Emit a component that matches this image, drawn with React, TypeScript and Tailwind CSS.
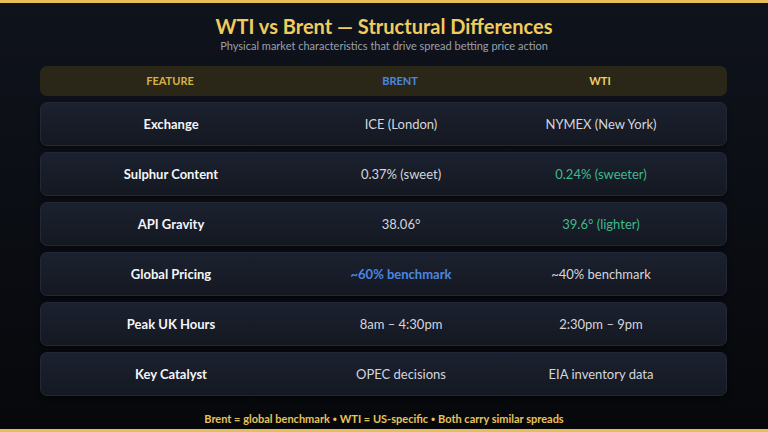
import React from "react";

type Row = {
  feature: string;
  brent: string;
  wti: string;
  brentClass?: string;
  wtiClass?: string;
};

const rows: Row[] = [
  { feature: "Exchange", brent: "ICE (London)", wti: "NYMEX (New York)" },
  { feature: "Sulphur Content", brent: "0.37% (sweet)", wti: "0.24% (sweeter)", wtiClass: "text-[#3dbb8c]" },
  { feature: "API Gravity", brent: "38.06°", wti: "39.6° (lighter)", wtiClass: "text-[#3dbb8c]" },
  { feature: "Global Pricing", brent: "~60% benchmark", wti: "~40% benchmark", brentClass: "text-[#4a87e0] font-bold" },
  { feature: "Peak UK Hours", brent: "8am – 4:30pm", wti: "2:30pm – 9pm" },
  { feature: "Key Catalyst", brent: "OPEC decisions", wti: "EIA inventory data" },
];

function Dot() {
  return <span style={{ fontFamily: "'Noto Sans', sans-serif" }}> • </span>;
}

export default function App() {
  return (
    <div
      className="w-[768px] h-[432px] flex flex-col overflow-hidden bg-gradient-to-b from-[#0f131c] to-[#07080b]"
      style={{ fontFamily: "Lato, 'Noto Sans', sans-serif" }}
    >
      <div className="h-[3px] bg-[#e4bf57] shrink-0" />
      <div className="flex flex-col items-center pt-[11px]">
        <h1 className="text-[20px] leading-[24px] font-bold text-[#f2cb5e]">
          WTI vs Brent — Structural Differences
        </h1>
        <p className="mt-[1px] text-[11px] leading-[14px] text-[#9aa0ab]">
          Physical market characteristics that drive spread betting price action
        </p>
      </div>
      <div className="ml-[40px] w-[687px] mt-[13px] flex flex-col gap-[6px]">
        <div className="h-[30px] pt-[1px] rounded-[7px] bg-[#2a2719] grid grid-cols-[260px_200px_200px] items-center text-[11px] font-bold">
          <div className="text-center text-[#d6b243]">FEATURE</div>
          <div className="text-center text-[#4a87e0]">BRENT</div>
          <div className="text-center text-[#f0cf62]">WTI</div>
        </div>
        {rows.map((r) => (
          <div
            key={r.feature}
            className="h-[44px] pt-[2px] rounded-[7px] border border-[#232838] bg-gradient-to-b from-[#1c2130] to-[#141821] shadow-[0_2px_4px_rgba(0,0,0,0.5)] grid grid-cols-[260px_200px_200px] items-center text-[13px]"
          >
            <div className="text-center font-bold text-[#f4f5f7]">{r.feature}</div>
            <div className={"text-center " + (r.brentClass ?? "text-[#d3d6dd]")}>{r.brent}</div>
            <div className={"text-center " + (r.wtiClass ?? "text-[#d3d6dd]")}>{r.wti}</div>
          </div>
        ))}
      </div>
      <div className="flex-1 flex items-end justify-center pb-[3px]">
        <p className="text-[11px] leading-[14px] font-bold text-[#e8c35c] whitespace-pre">
          Brent = global benchmark<Dot />WTI = US-specific<Dot />Both carry similar spreads
        </p>
      </div>
      <div className="h-[3px] bg-[#e4bf57] shrink-0" />
    </div>
  );
}
